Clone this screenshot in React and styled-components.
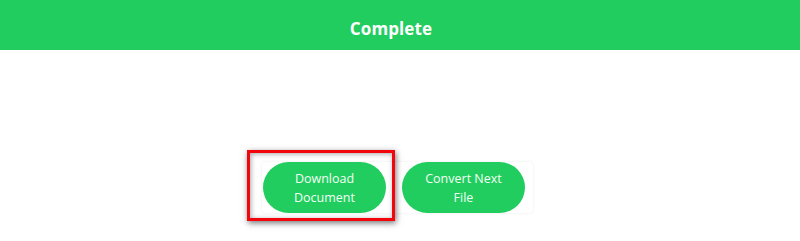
import React from "react";
import styled, { createGlobalStyle } from "styled-components";

const GlobalStyle = createGlobalStyle`
  html, body {
    margin: 0;
    padding: 0;
    background: #ffffff;
    font-family: "Open Sans", "Liberation Sans", sans-serif;
  }
`;

const Page = styled.div`
  width: 800px;
  height: 241px;
  display: flex;
  flex-direction: column;
  overflow: hidden;
`;

const Header = styled.header`
  height: 50px;
  background: #21cd5e;
  display: flex;
  align-items: center;
  justify-content: center;
`;

const Title = styled.h1`
  margin: 6px 0 0 0;
  font-size: 17px;
  font-weight: 700;
  color: #ffffff;
  letter-spacing: 0.1px;
  transform: translateX(-9px);
`;

const Body = styled.main`
  flex: 1;
  display: flex;
  justify-content: flex-start;
  padding: 112px 0 0 262px;
`;

const Actions = styled.div`
  position: relative;
  display: flex;
  gap: 8px;
  height: 51px;
  padding-left: 1px;
  background: #ffffff;
  border-radius: 4px;
  box-shadow: 0 0 3px rgba(0, 0, 0, 0.08);
`;

const Button = styled.button`
  width: 123px;
  height: 51px;
  margin: 0 8px 0 0;
  border: none;
  border-radius: 26px;
  background: #21cd5e;
  color: #f4fff7;
  font-family: "Open Sans", "Liberation Sans", sans-serif;
  font-size: 12.5px;
  line-height: 19px;
  font-weight: 500;
  padding: 0 10px;
  cursor: pointer;
`;

const Highlight = styled.div`
  position: absolute;
  left: -15px;
  top: -12px;
  width: 142px;
  height: 65px;
  border: 3px solid #f2060b;
  box-shadow: 1px 2px 6px rgba(0, 0, 0, 0.55), inset 1px 1px 5px rgba(0, 0, 0, 0.35);
  pointer-events: none;
`;

export default function App() {
  return (
    <>
      <GlobalStyle />
      <Page>
        <Header>
          <Title>Complete</Title>
        </Header>
        <Body>
          <Actions>
            <Button>
              Download
              <br />
              Document
            </Button>
            <Button>
              Convert Next
              <br />
              File
            </Button>
            <Highlight />
          </Actions>
        </Body>
      </Page>
    </>
  );
}
